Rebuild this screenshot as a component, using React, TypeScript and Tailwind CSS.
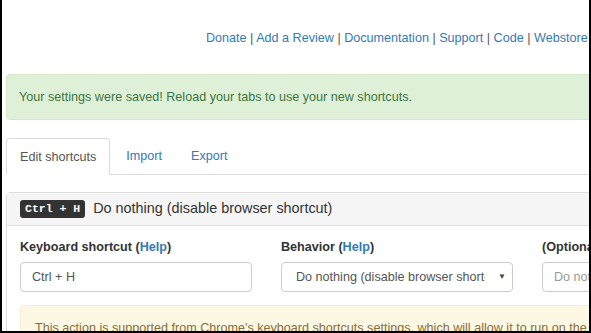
const LINKS = ['Donate', 'Add a Review', 'Documentation', 'Support', 'Code', 'Webstore']

function Label({ text, help }: { text: string; help?: boolean }) {
  return (
    <div className="h-[18px] leading-[18px] font-bold text-[12.6px] text-[#333] whitespace-nowrap mb-[6px]">
      {text}
      {help && (
        <>
          {' ('}<span className="text-[#337ab7]">Help</span>{')'}
        </>
      )}
    </div>
  )
}

export default function App() {
  return (
    <div
      className="w-[591px] h-[333px] overflow-hidden bg-white border-l-2 border-r-2 border-b-2 border-black text-[#333]"
      style={{ fontFamily: '"Liberation Sans", Arial, sans-serif' }}
    >
      <div className="w-[900px] pl-[4px] pt-[29px]">
        {/* header links */}
        <div className="ml-[200px] h-[18px] leading-[18px] text-[12.6px] whitespace-nowrap">
          {LINKS.map((l, i) => (
            <span key={l}>
              {i > 0 && <span className="text-[#555]"> | </span>}
              <span className="text-[#337ab7]">{l}</span>
            </span>
          ))}
        </div>

        {/* success alert */}
        <div className="mt-[27px] h-[46px] flex items-center px-[12px] bg-[#dff0d8] border border-[#d6e9c6] rounded-[4px] text-[#3c763d] text-[12.6px] whitespace-nowrap">
          Your settings were saved! Reload your tabs to use your new shortcuts.
        </div>

        {/* tabs */}
        <div className="mt-[18px] flex border-b border-[#ddd] text-[12.6px] h-[37px]">
          <div className="px-[13px] h-[37px] leading-[36px] border border-[#ddd] border-b-white rounded-t-[4px] bg-white text-[#555] -mb-px">
            Edit shortcuts
          </div>
          <div className="ml-[2px] px-[14px] leading-[36px] text-[#337ab7]">Import</div>
          <div className="ml-[2px] px-[13px] leading-[36px] text-[#337ab7]">Export</div>
        </div>

        {/* shortcut panel */}
        <div className="mt-[17px] border border-[#ddd] rounded-[4px]">
          <div className="h-[33px] flex items-center gap-[8px] px-[13px] bg-[#f5f5f5] border-b border-[#ddd]">
            <span
              className="h-[18px] px-[5px] leading-[18px] rounded-[3px] bg-[#333] text-white font-bold text-[11.5px] whitespace-nowrap"
              style={{ fontFamily: '"Liberation Mono", "DejaVu Sans Mono", monospace' }}
            >
              Ctrl + H
            </span>
            <span className="text-[14.4px] whitespace-nowrap text-[#333]">Do nothing (disable browser shortcut)</span>
          </div>

          <div className="px-[13px] pt-[12px]">
            <div className="flex gap-[29px]">
              <div className="w-[232px]">
                <Label text="Keyboard shortcut" help />
                <div className="h-[30px] border border-[#ccc] rounded-[4px] flex items-center px-[11px] text-[12.6px] text-[#555]">
                  Ctrl + H
                </div>
              </div>
              <div className="w-[232px]">
                <Label text="Behavior" help />
                <div className="h-[30px] border border-[#ccc] rounded-[4px] flex items-center pl-[14px] pr-[4px] text-[12.6px] text-[#555]">
                  <span className="w-[189px] overflow-hidden whitespace-nowrap">Do nothing (disable browser shortcut)</span>
                  <span className="ml-auto mr-[2px] text-[8px] text-[#444]">▼</span>
                </div>
              </div>
              <div className="w-[232px]">
                <Label text="(Optional) Label" />
                <div className="h-[30px] border border-[#ccc] rounded-[4px] flex items-center px-[11px] text-[12.6px] text-[#999] whitespace-nowrap">
                  Do nothing (disable browser shortcut)
                </div>
              </div>
            </div>

            <div className="mt-[13px] h-[60px] bg-[#fcf8e3] border border-[#faebcc] rounded-[4px] px-[14px] pt-[13px] text-[12.6px] leading-[18px] text-[#8a6d3b] whitespace-nowrap">
              This action is supported from Chrome's keyboard shortcuts settings, which will allow it to run on the new tab page and other pages.
            </div>
          </div>
        </div>
      </div>
    </div>
  )
}
